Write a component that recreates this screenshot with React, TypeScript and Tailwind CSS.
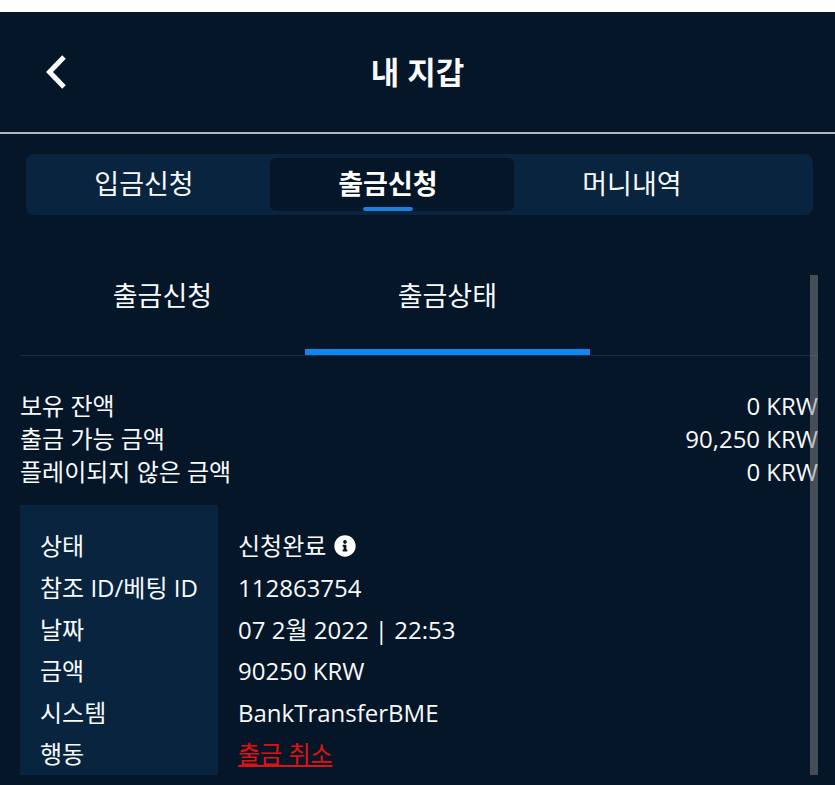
import React from "react"
import { FaInfoCircle } from "react-icons/fa"
import clsx from "clsx"

const walletTabs = ["입금신청", "출금신청", "머니내역"]
const withdrawTabs = ["출금신청", "출금상태"]

const balances = [
  { label: "보유 잔액", value: "0 KRW" },
  { label: "출금 가능 금액", value: "90,250 KRW" },
  { label: "플레이되지 않은 금액", value: "0 KRW" },
]

const details: { label: string; value: React.ReactNode }[] = [
  {
    label: "상태",
    value: (
      <span className="flex items-center gap-2">
        신청완료
        <FaInfoCircle className="size-[22px] text-white" />
      </span>
    ),
  },
  { label: "참조 ID/베팅 ID", value: "112863754" },
  { label: "날짜", value: "07 2월 2022 | 22:53" },
  { label: "금액", value: "90250 KRW" },
  { label: "시스템", value: "BankTransferBME" },
  {
    label: "행동",
    value: (
      <a href="#cancel" className="text-[#e01111] underline">
        출금 취소
      </a>
    ),
  },
]

export default function App() {
  return (
    <div className="min-h-screen bg-[#041627] font-['Open_Sans','Noto_Sans_CJK_KR',sans-serif] text-[#f8fafc]">
      <div className="h-3 bg-white" />

      <header className="grid h-[122px] grid-cols-[112px_1fr_112px] items-center border-b-2 border-[#b4babf]">
        <button aria-label="뒤로" className="flex justify-center">
          <svg viewBox="0 0 20 34" className="h-[34px] w-5" fill="none" stroke="white" strokeWidth="5">
            <path d="M18 2 L3.5 17 L18 32" />
          </svg>
        </button>
        <h1 className="text-center text-[31px] font-bold">내 지갑</h1>
      </header>

      <nav className="mt-5 mr-[22px] ml-[26px] flex h-[61px] rounded-lg bg-[#08243e] py-1">
        {walletTabs.map((tab, i) => (
          <button
            key={tab}
            className={clsx(
              "relative w-[31%] rounded-md pr-2 text-[27px]",
              i === 1 && "bg-[#041627] font-bold text-white"
            )}
          >
            {tab}
            {i === 1 && (
              <span className="absolute right-2 bottom-0 left-0 mx-auto h-1 w-[50px] rounded-full bg-[#1b80dc]" />
            )}
          </button>
        ))}
      </nav>

      <main className="mt-[60px] mr-[17px] ml-5 pb-[10px]">
        <div className="relative">
          <div className="flex h-[81px] border-b border-[#1c2e3f]">
            {withdrawTabs.map((tab, i) => (
              <button
                key={tab}
                className={clsx(
                  "w-[35.7%] border-b-[6px] pb-8 text-[27px]",
                  i === 1 ? "border-[#0d87f2]" : "border-transparent"
                )}
              >
                {tab}
              </button>
            ))}
          </div>

          <dl className="mt-[33px] text-2xl">
            {balances.map(({ label, value }) => (
              <div key={label} className="flex h-[33px] items-center justify-between">
                <dt>{label}</dt>
                <dd>{value}</dd>
              </div>
            ))}
          </dl>

          <table className="mt-[17px] h-[270px] w-full text-left text-2xl">
            <tbody>
              {details.map(({ label, value }, i) => (
                <tr key={label} className={i === 0 ? "h-[62px]" : "h-[41px]"}>
                  <th
                    className={clsx(
                      "w-[198px] bg-[#08243e] px-5 font-normal whitespace-nowrap",
                      i === 0 && "pt-5"
                    )}
                  >
                    {label}
                  </th>
                  <td className={clsx("px-5", i === 0 && "pt-5")}>{value}</td>
                </tr>
              ))}
            </tbody>
          </table>

          {/* scrollbar thumb */}
          <div className="absolute inset-y-0 right-0 w-2 bg-[#868686]/50" />
        </div>
      </main>
    </div>
  )
}
